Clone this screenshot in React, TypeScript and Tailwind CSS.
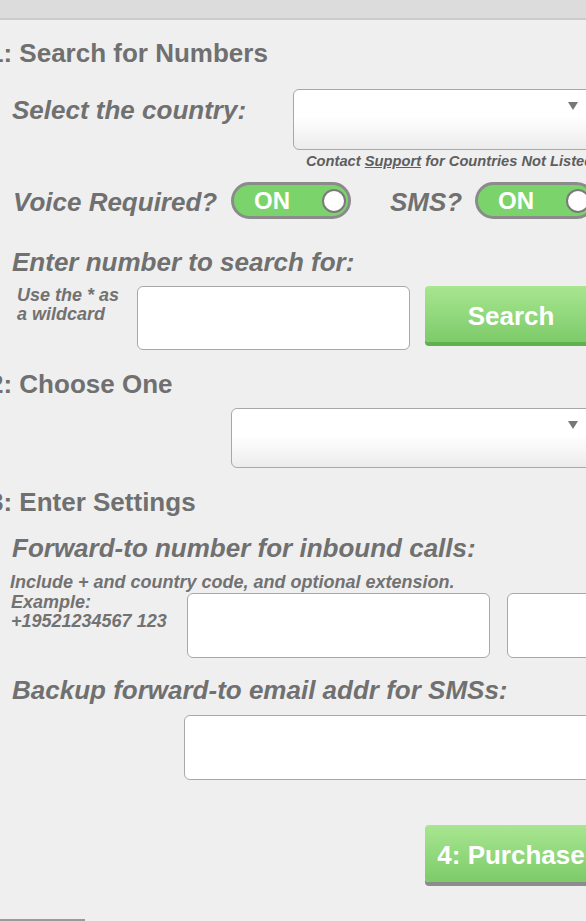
import React from "react";

function Select({ className }: { className: string }) {
  return (
    <div
      className={`shrink-0 rounded-[6px] border-[1.5px] border-[#a8a8a8] bg-[linear-gradient(to_bottom,#ffffff_0%,#ffffff_45%,#ececec_100%)] flex justify-end items-start pr-[21px] pt-[12px] ${className}`}
    >
      <svg width="10" height="8" viewBox="0 0 10 8">
        <path d="M0 0 H10 L5 8 Z" fill="#777777" />
      </svg>
    </div>
  );
}

function Input({ className }: { className: string }) {
  return (
    <div
      className={`shrink-0 rounded-[6px] border-[1.5px] border-[#a8a8a8] bg-white ${className}`}
    />
  );
}

function Toggle() {
  return (
    <div className="w-[120px] h-[37px] shrink-0 rounded-full border-[3px] border-[#8b8b8b] bg-[#7bd46b] flex items-center justify-between pl-[20px] pr-[2px]">
      <span className="text-white font-bold text-[24px] leading-none pt-[1px]">ON</span>
      <span className="w-[24px] h-[24px] rounded-full bg-white border-[2.5px] border-[#7a7a7a]" />
    </div>
  );
}

function GreenButton({
  children,
  shadow,
  className,
}: {
  children: React.ReactNode;
  shadow: string;
  className: string;
}) {
  return (
    <div
      className={`shrink-0 w-[172px] rounded-[4px] bg-[linear-gradient(to_bottom,#a8e690,#7dcb6a)] flex items-center justify-center pt-[4px] text-white font-bold text-[26px] leading-none whitespace-nowrap ${shadow} ${className}`}
    >
      {children}
    </div>
  );
}

export default function App() {
  const label =
    "text-[26px] leading-[30px] font-bold italic whitespace-nowrap text-[#707070]";
  const heading =
    "ml-[-11px] text-[26px] leading-[30px] font-bold whitespace-nowrap text-[#707070]";
  const small =
    "text-[18px] font-bold italic whitespace-nowrap text-[#727272]";
  return (
    <div className="w-[586px] h-[921px] overflow-hidden bg-[#efefef] font-['Liberation_Sans',Arial,sans-serif]">
      <div className="h-[20px] bg-[#dcdcdc] border-b-[2px] border-[#cbcbcb]" />

      <div className={`mt-[18px] ${heading}`}>1: Search for Numbers</div>

      <div className="mt-[21px] flex items-start">
        <div className={`w-[293px] shrink-0 pl-[12px] pt-[6px] ${label}`}>
          Select the country:
        </div>
        <Select className="w-[307px] h-[61px]" />
      </div>

      <div className="mt-[3px] ml-[306px] text-[14.7px] leading-[16px] font-bold italic whitespace-nowrap text-[#5e5e5e]">
        Contact <span className="underline">Support</span> for Countries Not
        Listed
      </div>

      <div className="mt-[13px] flex items-center h-[37px]">
        <div className={`w-[231px] shrink-0 pl-[13px] pt-[2px] ${label}`}>
          Voice Required?
        </div>
        <Toggle />
        <div className={`ml-[39px] w-[85px] shrink-0 pt-[2px] ${label}`}>SMS?</div>
        <Toggle />
      </div>

      <div className={`mt-[28px] pl-[12px] ${label}`}>
        Enter number to search for:
      </div>

      <div className="mt-[9px] flex items-start">
        <div className={`w-[137px] shrink-0 pl-[17px] leading-[19px] ${small}`}>
          Use the * as
          <br />a wildcard
        </div>
        <Input className="w-[273px] h-[64px]" />
        <GreenButton shadow="shadow-[0_4px_0_#5eb24e]" className="ml-[15px] h-[56px]">
          Search
        </GreenButton>
      </div>

      <div className={`mt-[19px] ${heading}`}>2: Choose One</div>

      <div className="mt-[9px] flex">
        <Select className="ml-[231px] w-[369px] h-[60px]" />
      </div>

      <div className={`mt-[19px] ${heading}`}>3: Enter Settings</div>

      <div className={`mt-[16px] pl-[12px] ${label}`}>
        Forward-to number for inbound calls:
      </div>

      <div className={`mt-[10px] pl-[10px] leading-[19.5px] ${small}`}>
        Include + and country code, and optional extension.
      </div>
      <div className="flex items-start">
        <div className={`w-[187px] shrink-0 pl-[11px] leading-[19.5px] ${small}`}>
          Example:
          <br />
          +19521234567 123
        </div>
        <Input className="w-[303px] h-[65px]" />
        <Input className="ml-[17px] w-[200px] h-[65px]" />
      </div>

      <div className={`mt-[17px] pl-[12px] ${label}`}>
        Backup forward-to email addr for SMSs:
      </div>

      <div className="mt-[10px] flex">
        <Input className="ml-[184px] w-[420px] h-[65px]" />
      </div>

      <div className="mt-[45px] flex">
        <GreenButton shadow="shadow-[0_4px_0_#8c8c8c]" className="ml-[425px] h-[57px]">
          4: Purchase
        </GreenButton>
      </div>

      <div className="mt-[37px] w-[85px] h-[2px] bg-[#9a9a9a]" />
    </div>
  );
}
